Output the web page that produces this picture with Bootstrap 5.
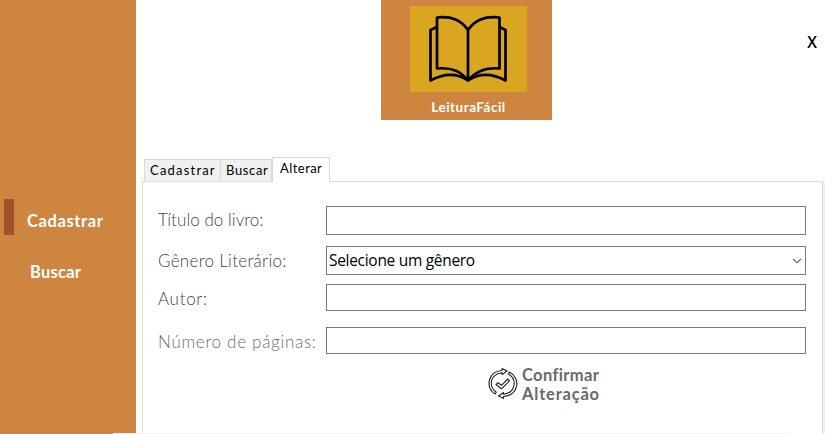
<!DOCTYPE html>
<html lang="pt-BR">
<head>
<meta charset="utf-8">
<meta name="viewport" content="width=device-width, initial-scale=1">
<title>LeituraFácil</title>
<link href="https://cdn.jsdelivr.net/npm/bootstrap@5.3.0/dist/css/bootstrap.min.css" rel="stylesheet">
<style>
body{font-family:"Century Gothic","Lato",sans-serif;background:#fff;color:#000;line-height:1.2}
.app{height:434px}
.side{width:136px;background:#cd853f;padding-top:199px}
.side a{color:#fff;font-weight:700;font-size:16.5px;line-height:36px;text-decoration:none;white-space:nowrap}
.marker{width:10px;height:36px;background:#a0522d;margin:0 13px 0 4px}
.side .s-cad{letter-spacing:.6px;padding-top:4px;height:36px}
.side .s-bus{margin:19px 0 0 30px;letter-spacing:.25px}
.top-area{height:157px}
.brand-box{width:171px;height:120px;background:#cd853f;margin-left:245px;padding-top:6px}
.brand-art{width:117px;height:86px;background:#daa520;margin-left:4px}
.brand-name{color:#fff;font-weight:700;font-size:13.5px;line-height:16px;margin-top:7px;letter-spacing:.5px;padding-left:4px}
.close-x{background:none;border:0;padding:0;margin:34px 8px 0 0;font:600 15.5px/16px "Open Sans",sans-serif}
.tabs{height:25px;margin-left:8px;position:relative;z-index:1;border:0}
.tabs .nav-link{border:1px solid #d9d9d9;border-radius:0;margin:0;background:#f0f0f0;color:#000;font-size:13px;height:23px;padding:0 0 0 5px;line-height:21px;white-space:nowrap}
.tabs .t1{width:77px;letter-spacing:1.2px}
.tabs .t2{width:51px;border-left:0;letter-spacing:.65px}
.tabs .nav-link.active{width:58px;height:25px;background:#fff;border-color:#d9d9d9;border-bottom:0;padding-left:7px;letter-spacing:.45px;line-height:21px;color:#000}
.panel{margin:-1px 0 0 6px;width:681px;height:253px;border:1px solid #d9d9d9;border-bottom:0;padding:24px 16px 0 15px}
.edge{width:2px;height:252px;background:#f0f0f0}
.field-row label{width:168px;height:20px;line-height:20px;font-size:17px;font-weight:300;color:#444;white-space:nowrap}
.field-row .l1{letter-spacing:.05px;margin-top:-2px}
.field-row .l2{letter-spacing:.3px}
.field-row .l3{letter-spacing:.7px;margin-top:2px}
.field-row .l4{letter-spacing:.7px;margin-top:2px}
.field-row label.pages{color:#6c6c6c}
.box{width:480px;border:1px solid #7a7a7a;border-radius:0;background:#fff;padding:0}
.h29{height:29px}.h27{height:27px}
.gap-a{margin-bottom:11px}.gap-b{margin-bottom:9px}.gap-c{margin-bottom:16px}
.combo{font:15.5px/27px "Segoe UI","Open Sans",sans-serif;letter-spacing:-.3px;padding:0 3px 0 2px}
.confirm{background:none;border:0;padding:0;margin:10px 0 0 330px;color:#696969;font-weight:700;font-size:16.5px;line-height:19px;text-align:left;gap:4px}
.confirm .words{padding-top:2px;margin-bottom:-2px}
.confirm .c1{letter-spacing:.35px}.confirm .c2{letter-spacing:.8px}
.foot-line{position:absolute;left:113px;top:433px;width:673px;height:1px;background:#f0f0f0;z-index:3}
</style>
<script src="https://cdn.jsdelivr.net/npm/bootstrap@5.3.0/dist/js/bootstrap.bundle.min.js"></script>
</head>
<body class="overflow-hidden">
<div class="app d-flex position-relative">
  <nav class="side flex-shrink-0">
    <div class="d-flex"><span class="marker"></span><a href="#" class="s-cad">Cadastrar</a></div>
    <a href="#" class="s-bus d-block">Buscar</a>
  </nav>
  <main class="flex-grow-1">
    <header class="top-area d-flex justify-content-between align-items-start">
      <div class="brand-box d-flex flex-column align-items-center">
        <div class="brand-art">
          <svg class="d-block" width="117" height="86" viewBox="0 0 117 86" fill="none" stroke="#000" stroke-width="2.7" stroke-linejoin="round">
            <path d="M58 24C51 14 42 10 27 11.500V62.500C43 61 51 66 58 74.500C65 66 74 61 89.500 62.500V11.500C74 10 65 14 58 24V74.500"/>
            <path d="M27 21L20.500 24V74.500C34 67 47 67 58 74.500C69 67 82 67 95.500 74.500V24L89.500 21"/>
          </svg>
        </div>
        <div class="brand-name">LeituraFácil</div>
      </div>
      <button class="close-x" type="button">X</button>
    </header>
    <div class="tabs nav nav-tabs align-items-end">
      <a class="nav-link t1" href="#">Cadastrar</a>
      <a class="nav-link t2" href="#">Buscar</a>
      <a class="nav-link active" href="#">Alterar</a>
    </div>
    <div class="d-flex">
      <form class="panel flex-shrink-0">
        <div class="field-row d-flex align-items-center gap-a"><label class="l1">Título do livro:</label><input class="box h29" aria-label="Título"></div>
        <div class="field-row d-flex align-items-center gap-b"><label class="l2">Gênero Literário:</label>
          <div class="box h29 combo d-flex justify-content-between align-items-center"><span>Selecione um gênero</span>
            <svg width="10" height="6" viewBox="0 0 10 6" fill="none" stroke="#555" stroke-width="1.1"><path d="M1 .8L5 4.800L9 .8"/></svg></div></div>
        <div class="field-row d-flex align-items-center gap-c"><label class="l3">Autor:</label><input class="box h27" aria-label="Autor"></div>
        <div class="field-row d-flex align-items-center"><label class="l4 pages">Número de páginas:</label><input class="box h27" aria-label="Páginas"></div>
        <button type="button" class="confirm d-flex align-items-center">
          <svg width="30" height="34" viewBox="0 0 30 34" fill="none" stroke="#222" stroke-width="1.1" stroke-linejoin="round" stroke-linecap="round">
            <path d="M7 28C-3 21 0 5.500 14 4.500V2.500L19 5L14 8.500V6.800C3 8 -.5 19.500 8.300 26.200Z"/>
            <path d="M21.500 6C33 12 31 29 15.500 30.500V32.500L10.500 30L15.500 26.500V28.200C27 27 30 14 20.300 7.800Z"/>
            <path d="M8 18.500L10 16.700L13.500 19.300L19.700 13L21.500 14.800L13.500 22.800Z"/>
          </svg>
          <span class="words"><span class="c1">Confirmar</span><br><span class="c2">Alteração</span></span>
        </button>
      </form>
      <div class="edge"></div>
    </div>
  </main>
  <div class="foot-line"></div>
</div>
</body>
</html>
